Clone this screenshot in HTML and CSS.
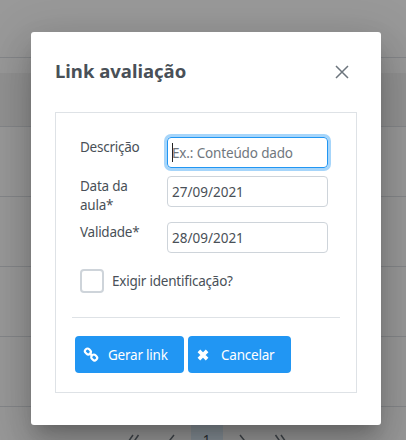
FILE: index.html
```html
<!DOCTYPE html>
<html lang="pt-BR">
<head>
<meta charset="utf-8">
<title>Link avaliação</title>
<link rel="stylesheet" href="styles.css">
</head>
<body>
<main class="page">
  <div class="toolbar"></div>
  <div class="caption"></div>
  <div class="table-head"></div>
  <div class="table-row"></div>
  <div class="table-row"></div>
  <div class="table-row"></div>
  <div class="table-row"></div>
  <div class="paginator">
    <svg width="12" height="12" viewBox="0 0 12 12"><path d="M5 1 1.500 6 5 11M10.500 1 7 6l3.500 5"/></svg>
    <svg width="12" height="12" viewBox="0 0 12 12"><path d="M8 1 4 6l4 5"/></svg>
    <span class="current">1</span>
    <svg width="12" height="12" viewBox="0 0 12 12"><path d="m4 1 4 5-4 5"/></svg>
    <svg width="12" height="12" viewBox="0 0 12 12"><path d="M1.500 1 5 6l-3.500 5M7 1l3.500 5L7 11"/></svg>
  </div>
</main>
<div class="mask">
  <section class="dialog" role="dialog">
    <header class="dialog-header">
      <h1><span>Link avaliação</span></h1>
      <svg class="close" width="14" height="14" viewBox="0 0 14 14"><path d="m1 1 12 12M13 1 1 13"/></svg>
    </header>
    <form class="panel">
      <div class="field first"><label>Descrição</label><div class="input focused"><i class="caret"></i><span class="placeholder">Ex.: Conteúdo dado</span></div></div>
      <div class="field second"><label>Data da aula*</label><div class="input"><span>27/09/2021</span></div></div>
      <div class="field"><label>Validade*</label><div class="input"><span>28/09/2021</span></div></div>
      <div class="check"><i class="box"></i><span class="check-label">Exigir identificação?</span></div>
      <hr>
      <div class="actions">
        <button type="button" class="link-button">
          <svg width="16" height="16" viewBox="0 0 16 16"><g fill="none" stroke="#fff" stroke-width="2.200"><rect x="1.900" y="2" width="6" height="5" rx="2.300" transform="rotate(45 4.900 4.500)"/><rect x="8.200" y="8" width="6" height="5" rx="2.300" transform="rotate(45 11.200 10.500)"/><path d="m6.400 5.900 3.200 3.200"/></g></svg>
          <span>Gerar link</span>
        </button>
        <button type="button" class="cancel-button">
          <svg width="12" height="12" viewBox="0 0 12 12"><path d="m1.900 1.900 8.200 8.200m0-8.200-8.200 8.200" fill="none" stroke="#fff" stroke-width="3.700"/></svg>
          <span>Cancelar</span>
        </button>
      </div>
    </form>
  </section>
</div>
</body>
</html>
```
FILE: styles.css
```css
* { box-sizing: border-box; }
html { overflow: hidden; }
body {
  margin: 0;
  width: 406px;
  height: 440px;
  overflow: hidden;
  font: 13.500px/19px "Noto Sans", sans-serif;
  color: #495057;
}
svg { display: block; }
.page { height: 440px; overflow: hidden; background: #fff; }
.toolbar { height: 58px; border-bottom: 1px solid #dee2e6; }
.caption { height: 15px; }
.table-head { height: 54px; background: #f4f4f4; border-bottom: 1px solid #dee2e6; }
.table-row { height: 70px; border-bottom: 1px solid #dee2e6; }
.paginator { display: flex; align-items: center; justify-content: center; height: 66px; padding-left: 7px; }
.paginator svg { margin: 0 13px; fill: none; stroke: #6c757d; stroke-width: 1.500; }
.paginator .current { width: 32px; height: 40px; line-height: 40px; text-align: center; background: #e3f2fd; }
.mask {
  position: absolute;
  inset: 0;
  padding: 32px 25px 15px 31px;
  background: rgba(0, 0, 0, .4);
  overflow: hidden;
}
.dialog {
  width: 350px;
  height: 393px;
  padding: 24px;
  border-radius: 3px;
  background: #fff;
  box-shadow: 0 11px 15px -7px rgba(0,0,0,.2), 0 24px 38px 3px rgba(0,0,0,.14), 0 9px 46px 8px rgba(0,0,0,.12);
}
.dialog-header { display: flex; align-items: center; justify-content: space-between; height: 32px; padding-right: 8px; }
h1 { margin: 0; padding-bottom: 2px; font-size: 18.500px; line-height: 30px; font-weight: 700; }
.close { fill: none; stroke: #6c757d; stroke-width: 1.500; }
.panel { width: 302px; height: 281px; margin: 24px 0 0; padding: 24px 16px; border: 1px solid #dee2e6; }
.field { display: flex; height: 31px; padding-left: 8px; }
.field.first { height: 39px; }
.field.second { height: 46px; }
.field label { width: 64px; margin: 1px 23px 0 0; letter-spacing: -.25px; }
.input { display: flex; align-items: center; width: 161px; height: 31px; padding: 2px 4px 0; border: 1px solid #ced4da; border-radius: 4px; }
.focused { border-color: #2196f3; box-shadow: 0 0 0 3px #a6d5fa; }
.caret { width: 1px; height: 19px; margin: -2px -1px 0 0; background: #222; }
.placeholder { color: #70777e; letter-spacing: -.15px; }
.check { display: flex; align-items: center; gap: 8px; height: 24px; margin: 16px 0 0 8px; }
.check-label { letter-spacing: -.22px; }
.box { width: 24px; height: 24px; border: 2px solid #ced4da; border-radius: 4px; }
hr { height: 1px; margin: 24px 0 18px; border: 0; background: #dee2e6; }
.actions { display: flex; gap: 4px; padding-left: 3px; }
button { display: flex; align-items: center; height: 37px; border: 0; border-radius: 4px; color: #fff; background: #2196f3; font: inherit; text-align: left; white-space: nowrap; }
button span { padding-top: 2px; letter-spacing: -.22px; }
.link-button { width: 109px; gap: 9px; padding: 0 0 0 8px; }
.cancel-button { width: 103px; gap: 12px; padding: 0 0 0 9px; }
```
